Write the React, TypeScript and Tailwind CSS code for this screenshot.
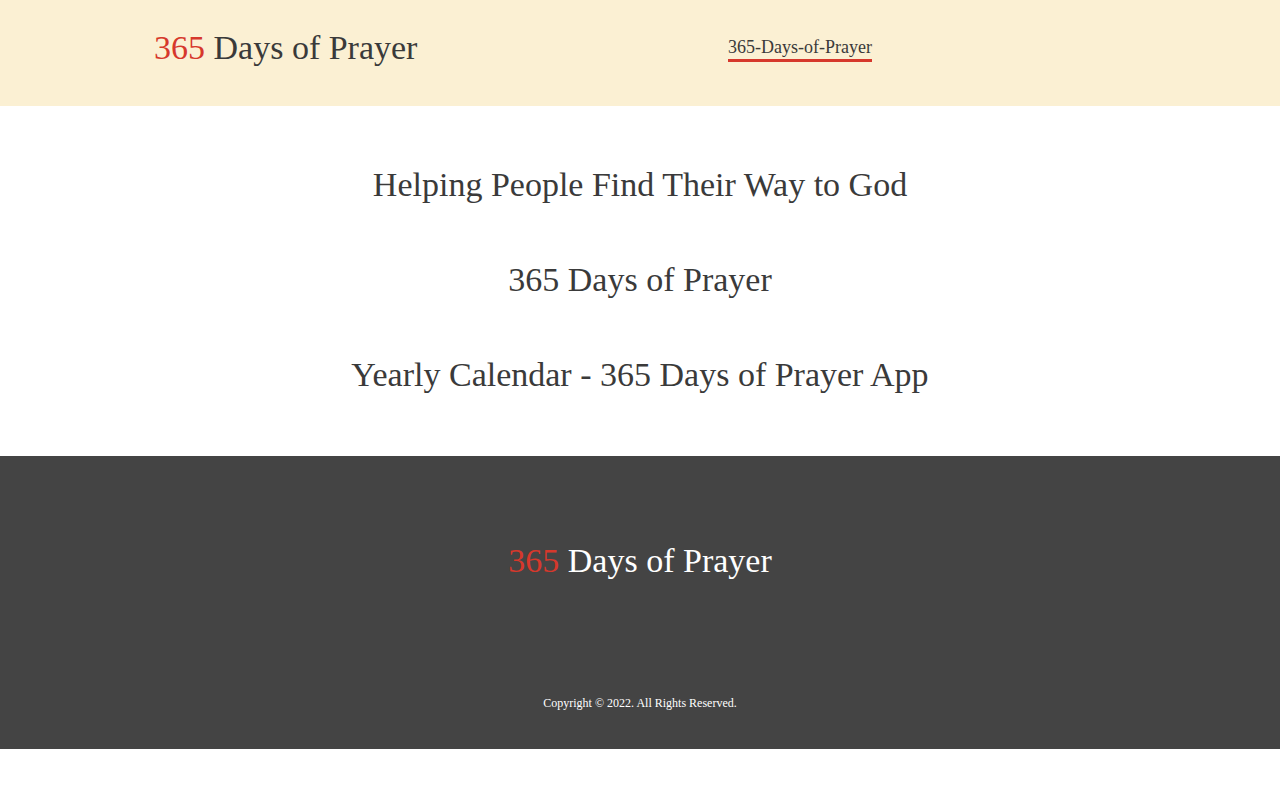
import React from "react";

export default function App() {
  const serif = { fontFamily: '"Liberation Serif", "Times New Roman", serif' };
  return (
    <div style={serif} className="bg-white text-[#3a3a3a]">
      <header className="bg-[#fbf0d3] h-[106px]">
        <div className="w-[972px] mx-auto h-full flex items-center">
          <div className="w-[574px] text-[34px] leading-[40px] -mt-[11px]">
            <span className="text-[#d6382c]">365</span> Days of Prayer
          </div>
          <nav className="-mt-[9px]">
            <a className="inline-block text-[18px] leading-[22px] border-b-[3px] border-[#d6382c] pb-[1px] text-[#3a3a3a]">
              365-Days-of-Prayer
            </a>
          </nav>
        </div>
      </header>
      <main className="flex flex-col items-center pt-[58px] pb-[61px] gap-[54px] text-[34px] leading-[41px]">
        <h2>Helping People Find Their Way to God</h2>
        <h2>365 Days of Prayer</h2>
        <h2>Yearly Calendar - 365 Days of Prayer App</h2>
      </main>
      <footer className="bg-[#444444] h-[293px] flex flex-col items-center pt-[84px]">
        <div className="text-[34px] leading-[41px] text-white">
          <span className="text-[#d6382c]">365</span> Days of Prayer
        </div>
        <div className="mt-[114px] text-[12px] leading-[16px] text-white">
          Copyright © 2022. All Rights Reserved.
        </div>
      </footer>
    </div>
  );
}
